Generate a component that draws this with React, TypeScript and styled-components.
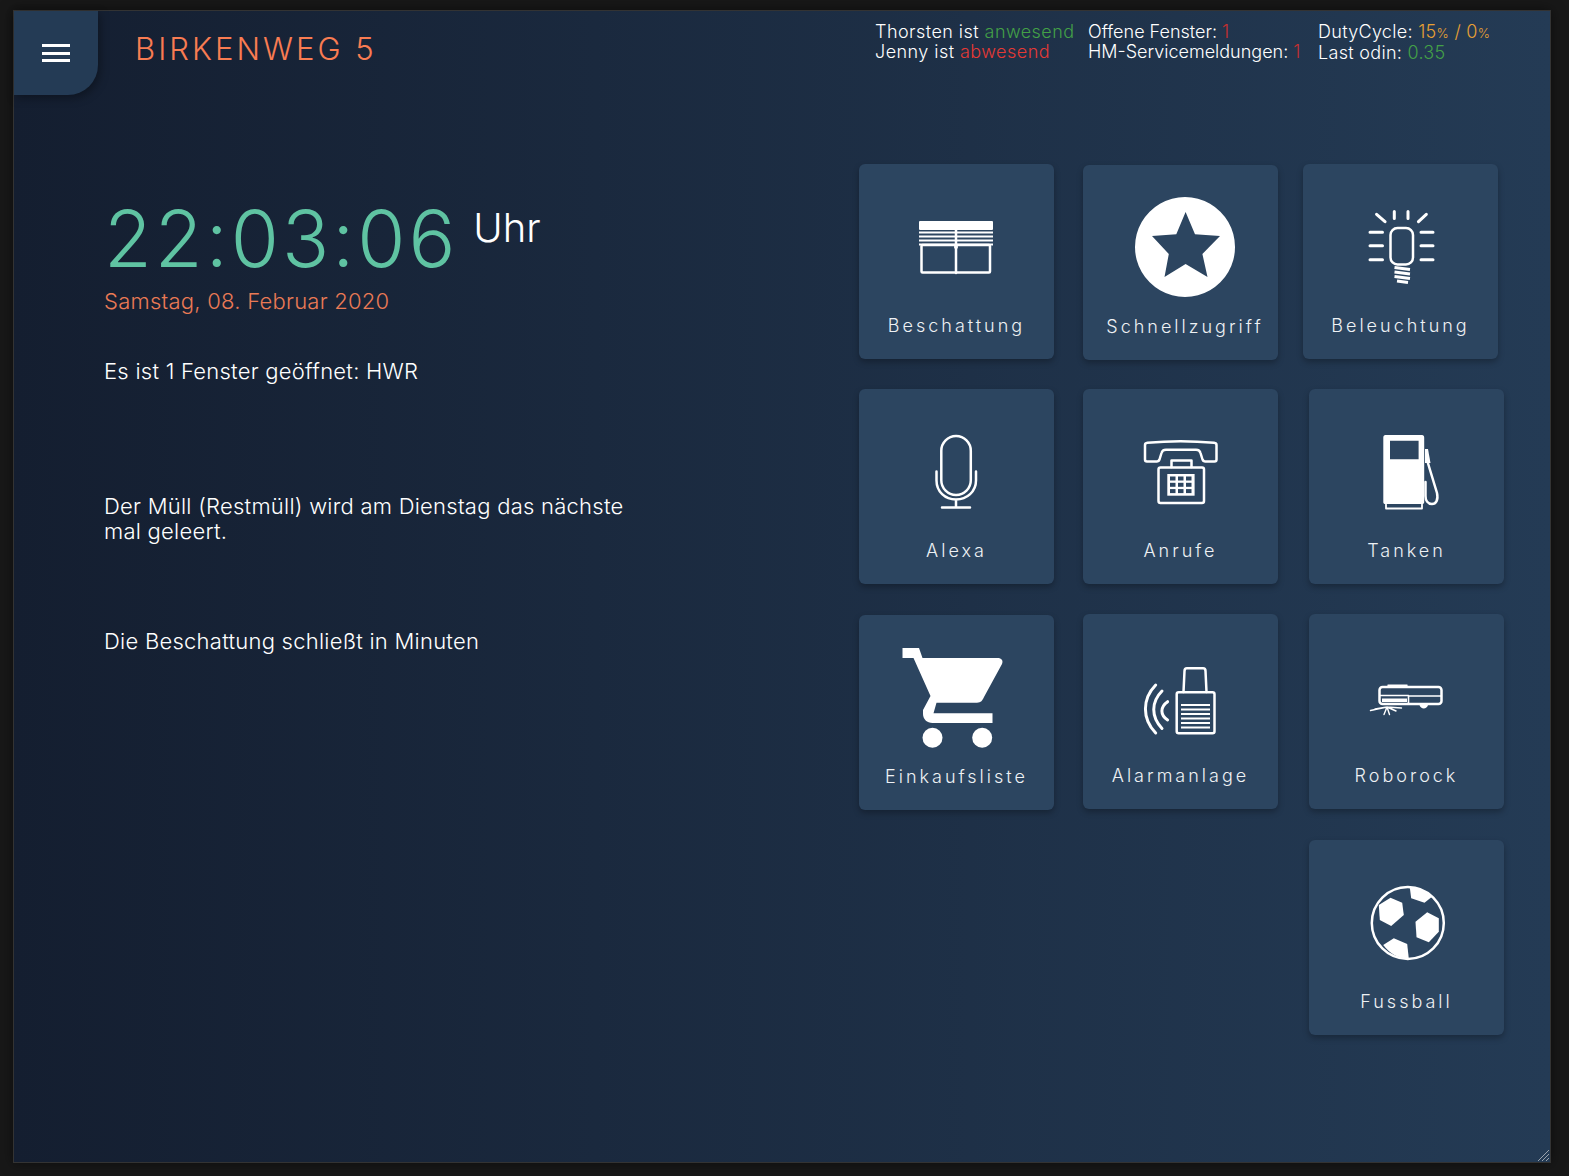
import React from "react"
import styled, { createGlobalStyle } from "styled-components"

const GlobalStyle = createGlobalStyle`
  html, body {
    margin: 0;
    height: 100%;
    background: #181818;
  }
  body {
    font-family: Inter, "Liberation Sans", sans-serif;
    font-weight: 300;
    color: #fff;
  }
`

const Page = styled.div`
  box-sizing: border-box;
  width: 1569px;
  height: 1176px;
  padding: 10px 18px 13px 13px;
  background: #181818;
`

const Frame = styled.div`
  position: relative;
  box-sizing: border-box;
  height: 100%;
  border: 1px solid #333;
  background: linear-gradient(to right, #141e30, #243b55);
  display: flex;
  flex-direction: column;
  box-shadow: 0 0 12px rgba(0, 0, 0, 0.5);
`

const Header = styled.header`
  display: flex;
  height: 153px;
  flex-shrink: 0;
  align-items: flex-start;
`

const MenuTile = styled.div`
  width: 84px;
  height: 84px;
  background: #243b55;
  border-bottom-right-radius: 30px;
  box-shadow: 2px 3px 10px rgba(0, 0, 0, 0.35);
  display: flex;
  flex-direction: column;
  align-items: center;
  justify-content: center;
  gap: 4.5px;
  flex-shrink: 0;
`

const MenuBar = styled.span`
  display: block;
  width: 28px;
  height: 3px;
  background: #fff;
`

const Title = styled.h1`
  margin: 20px 0 0 37px;
  font-size: 31px;
  line-height: 36px;
  font-weight: 300;
  letter-spacing: 3px;
  color: #f97c52;
  white-space: nowrap;
`

const StatusGroup = styled.div`
  margin: 11px 0 0 auto;
  width: 675px;
  display: flex;
  font-size: 18px;
  line-height: 20px;
`

const StatusColumn = styled.div<{ $width: number; $tracking: number }>`
  width: ${(p) => p.$width}px;
  letter-spacing: ${(p) => p.$tracking}px;
  flex-shrink: 0;
  white-space: nowrap;
`

const Tone = styled.span<{ $tone: string }>`
  color: ${(p) => p.$tone};
`

const Percent = styled.span`
  font-size: 13px;
`

const Body = styled.main`
  display: flex;
  flex: 1;
`

const Overview = styled.section`
  width: 845px;
  padding-left: 90px;
  box-sizing: border-box;
  flex-shrink: 0;
`

const ClockRow = styled.div`
  display: flex;
  align-items: flex-start;
  height: 120px;
`

const Clock = styled.div`
  font-size: 78px;
  line-height: 100px;
  margin-top: 25px;
  font-weight: 280;
  color: #5fc3a2;
  letter-spacing: 3px;
`

const ClockUnit = styled.div`
  font-size: 40px;
  line-height: 48px;
  margin: 40px 0 0 15px;
  font-weight: 300;
`

const DateLine = styled.div`
  font-size: 22px;
  line-height: 28px;
  margin-top: 3px;
  color: #ea7a55;
  letter-spacing: 0.25px;
`

const Messages = styled.div`
  margin-top: 44px;
  display: grid;
  grid-auto-rows: 135px;
`

const Message = styled.p`
  margin: 0;
  width: 540px;
  font-size: 22px;
  line-height: 25px;
  letter-spacing: 0.25px;
`

const TileGrid = styled.div`
  display: grid;
  grid-template-columns: 224px 226px 195px;
  grid-auto-rows: 225px;
`

const Tile = styled.div<{ $col?: number; $dx?: number; $dy?: number; $inset?: number }>`
  ${(p) => (p.$col ? `grid-column: ${p.$col};` : "")}
  box-sizing: border-box;
  width: 195px;
  height: 195px;
  margin-left: ${(p) => p.$dx ?? 0}px;
  margin-top: ${(p) => p.$dy ?? 0}px;
  padding: 33px 0 0 ${(p) => p.$inset ?? 0}px;
  background: #2c4560;
  border-radius: 6px;
  box-shadow: 0 3px 6px rgba(0, 0, 0, 0.28);
  display: flex;
  flex-direction: column;
  align-items: center;
`

const TileIcon = styled.svg`
  width: 100px;
  height: 100px;
  flex-shrink: 0;
  overflow: visible;
  fill: none;
  stroke: #fff;
  stroke-width: 2.5;
  stroke-linecap: round;
  stroke-linejoin: round;
`

const TileLabel = styled.div`
  margin-top: 17px;
  font-size: 18px;
  line-height: 24px;
  letter-spacing: 3px;
  color: #eef1f4;
  white-space: nowrap;
`

const ResizeGrip = styled.svg`
  position: absolute;
  right: 0;
  bottom: 0;
  width: 13px;
  height: 13px;
  stroke: #9aa3ad;
  stroke-width: 1;
`

const Solid = { fill: "#fff", stroke: "none" }
const Hole = { fill: "#2c4560", stroke: "none" }

const BlindIcon = () => (
  <TileIcon viewBox="2 0 100 100">
    <rect x="14" y="24" width="74" height="9" rx="1" style={Solid} />
    <path d="M14 35.500H88M14 39.500H88M14 43.500H88M14 47.500H88" strokeLinecap="butt" strokeWidth="2" />
    <rect x="16.500" y="48" width="68.500" height="27.500" rx="1" />
    <path d="M51 33V76" />
    <circle cx="51" cy="50" r="2" style={Solid} />
  </TileIcon>
)

const StarIcon = () => (
  <TileIcon viewBox="0 1 100 100">
    <path
      fillRule="evenodd"
      style={Solid}
      d="M50 0a50 50 0 1 0 .01 0ZM50.600 15L60 37.300L85 39L67.400 57L72.500 80L50.600 67L29.500 80L33.800 57L17 39L41.300 37.300Z"
    />
  </TileIcon>
)

const BulbIcon = () => (
  <TileIcon viewBox="1 0 100 100">
    <rect x="40.500" y="31" width="22.500" height="36.500" rx="7" />
    <path d="M44.500 70.500L60 72.500M44.500 75L60 77M44.500 79.500L60 81.500M47 84L58 85.500" strokeWidth="3" strokeLinecap="butt" />
    <path d="M20 35.300H32.500M20 48.700H32.500M20 62.700H32.500M71 35.300H83M71 48.700H83M71 62.700H83M44.300 14.500V21.500M58 14.500V21.500M26.600 17.300L35 24.700M76.300 17.300L68.500 24.700" strokeWidth="3" />
  </TileIcon>
)

const MicIcon = () => (
  <TileIcon viewBox="2 0 100 100">
    <rect x="36.300" y="14" width="29.500" height="59" rx="14.700" />
    <path d="M31.500 49.500V58.500C31.500 69.500 40 77.500 51 77.500C62 77.500 71 69.500 71 58.500V49.500M51 77.500V85M37 85.500H65" />
  </TileIcon>
)

const PhoneIcon = () => (
  <TileIcon viewBox="2 0 100 100">
    <path d="M16 23C16 21.500 17 21 18.500 20.800C40 18.800 63 18.800 85 20.800C86.500 21 87.500 21.500 87.500 23V37.500C87.500 39 87 39.500 85.500 39.500H76C74.500 39.500 74 39 73.500 37.500L71.500 31C71 29 69 27.700 67 27.700H37C35 27.700 33 29 32.500 31L30.500 37.500C30 39 29.500 39.500 28 39.500H18C16.500 39.500 16 39 16 37.500Z" />
    <path d="M42.500 45V38.500H62.500V45" />
    <rect x="29.500" y="45.500" width="45.500" height="35.500" rx="2" />
    <rect x="38.300" y="52" width="27.300" height="21.700" style={Solid} />
    {[0, 1, 2].map((row) =>
      [0, 1, 2].map((col) => (
        <rect key={`${row}-${col}`} x={41 + col * 8} y={54.5 + row * 6.3} width="5.500" height="4" style={Hole} />
      ))
    )}
  </TileIcon>
)

const PumpIcon = () => (
  <TileIcon viewBox="1 0 100 100">
    <path
      fillRule="evenodd"
      style={Solid}
      d="M29.500 13H66C67.500 13 68.200 14 68.200 15.500V80C68.200 81.500 67.500 82 66 82H29.500C28 82 27.300 81.500 27.300 80V15.500C27.300 14 28 13 29.500 13ZM34 18.700V37.300H62.600V18.700Z"
    />
    <path d="M30 82.500V86.500H66V82.500" strokeWidth="1.800" />
    <path d="M71 38L81 71C82.500 78 80 82 76 82C72 82 69.500 78.500 69.500 74V60" />
    <path d="M69 27H72L74.500 41H69Z" style={Solid} />
  </TileIcon>
)

const CartIcon = () => (
  <TileIcon viewBox="1 0 100 100">
    <path
      style={Solid}
      d="M-3.500 0H13L16.500 10H91.500C95.500 10 97.500 12.500 96 16L78 49C76.500 52.500 75 54.700 71 54.700H30.500L27.500 65.300H86.500V75H26.500C21 75 17 71 17 66V62L24.500 48L7.500 10H-3.500Z"
    />
    <circle cx="26.500" cy="89.700" r="10" style={Solid} />
    <circle cx="76.200" cy="89.700" r="10" style={Solid} />
  </TileIcon>
)

const AlarmIcon = () => (
  <TileIcon viewBox="1 0 100 100">
    <rect x="46.700" y="45.300" width="37.800" height="41" rx="2" />
    <path d="M53.500 45L54.500 24C54.500 22 55.500 21.300 57 21.300H73C74.500 21.300 75.500 22 75.500 24L76.500 45" />
    <path d="M51 58H80M51 62.500H80M51 67H80M51 71.500H80M51 76H80M51 80.500H80" strokeWidth="2" strokeLinecap="butt" />
    <path d="M25.700 38C12 52 12 72 25.700 86M32 44C21 55 21 70 32 81.500M37.600 54.700C30 60 30 68 37.600 73" strokeWidth="3" />
  </TileIcon>
)

const RobotIcon = () => (
  <TileIcon viewBox="1 -1 100 100">
    <rect x="23.500" y="39" width="62" height="17" rx="3" />
    <path d="M32 37.300H51" strokeWidth="1.500" />
    <path d="M24 47.500H52.500V56M52.500 48H85" strokeWidth="1.600" strokeLinecap="butt" />
    <path d="M26 50.500H51V54H26Z" style={Solid} />
    <path d="M63.500 57C64.500 61.500 71 61.500 72 57Z" style={Solid} />
    <path d="M31 59L14.500 62.500M31 59L19 61M31 59L28 66.500M31 59L33.500 66.500M31 59L45.500 60M31 59L40 63" strokeWidth="1.400" />
  </TileIcon>
)

const BallIcon = () => (
  <TileIcon viewBox="1 1 100 100">
    <circle cx="51.800" cy="51" r="36" />
    <polygon points="34.500,25.700 46.200,30.700 47.800,43 35.200,54 23.800,48 22.800,33" style={Solid} />
    <polygon points="71.200,40.300 82.800,46.300 82.800,59.700 72.800,70.300 60.500,65.300 59.500,49.700" style={Solid} />
    <path d="M53.800 15.500C62 15.500 70 19 76 24.700L68.500 30.700L55.200 26.300Z" style={Solid} />
    <path d="M27.200 73L37.800 66.300L51.200 72L52.800 86.500C43 87 34 82 27.200 73Z" style={Solid} />
  </TileIcon>
)

const App: React.FC = () => {
  return (
    <Page>
      <GlobalStyle />
      <Frame>
        <Header>
          <MenuTile>
            <MenuBar />
            <MenuBar />
            <MenuBar />
          </MenuTile>
          <Title>BIRKENWEG 5</Title>
          <StatusGroup>
            <StatusColumn $width={213} $tracking={0.45}>
              Thorsten ist <Tone $tone="#43a047">anwesend</Tone>
              <br />
              Jenny ist <Tone $tone="#e53935">abwesend</Tone>
            </StatusColumn>
            <StatusColumn $width={230} $tracking={0}>
              Offene Fenster: <Tone $tone="#c62f2f">1</Tone>
              <br />
              HM-Servicemeldungen: <Tone $tone="#c62f2f">1</Tone>
            </StatusColumn>
            <StatusColumn $width={200} $tracking={0.3}>
              DutyCycle: <Tone $tone="#e8a033">15<Percent>%</Percent> / 0<Percent>%</Percent></Tone>
              <br />
              Last odin: <Tone $tone="#43a047">0.35</Tone>
            </StatusColumn>
          </StatusGroup>
        </Header>
        <Body>
          <Overview>
            <ClockRow>
              <Clock>22:03:06</Clock>
              <ClockUnit>Uhr</ClockUnit>
            </ClockRow>
            <DateLine>Samstag, 08. Februar 2020</DateLine>
            <Messages>
              <Message>Es ist 1 Fenster geöffnet: HWR</Message>
              <Message>Der Müll (Restmüll) wird am Dienstag das nächste mal geleert.</Message>
              <Message>Die Beschattung schließt in Minuten</Message>
            </Messages>
          </Overview>
          <TileGrid>
            <Tile>
              <BlindIcon />
              <TileLabel>Beschattung</TileLabel>
            </Tile>
            <Tile $dy={1} $inset={9}>
              <StarIcon />
              <TileLabel>Schnellzugriff</TileLabel>
            </Tile>
            <Tile $dx={-6}>
              <BulbIcon />
              <TileLabel>Beleuchtung</TileLabel>
            </Tile>
            <Tile>
              <MicIcon />
              <TileLabel>Alexa</TileLabel>
            </Tile>
            <Tile>
              <PhoneIcon />
              <TileLabel>Anrufe</TileLabel>
            </Tile>
            <Tile>
              <PumpIcon />
              <TileLabel>Tanken</TileLabel>
            </Tile>
            <Tile $dy={1}>
              <CartIcon />
              <TileLabel>Einkaufsliste</TileLabel>
            </Tile>
            <Tile>
              <AlarmIcon />
              <TileLabel>Alarmanlage</TileLabel>
            </Tile>
            <Tile>
              <RobotIcon />
              <TileLabel>Roborock</TileLabel>
            </Tile>
            <Tile $col={3} $dy={1}>
              <BallIcon />
              <TileLabel>Fussball</TileLabel>
            </Tile>
          </TileGrid>
        </Body>
        <ResizeGrip viewBox="0 0 13 13">
          <path d="M1 12L12 1M5 12L12 5M9 12L12 9" />
        </ResizeGrip>
      </Frame>
    </Page>
  )
}

export default App
